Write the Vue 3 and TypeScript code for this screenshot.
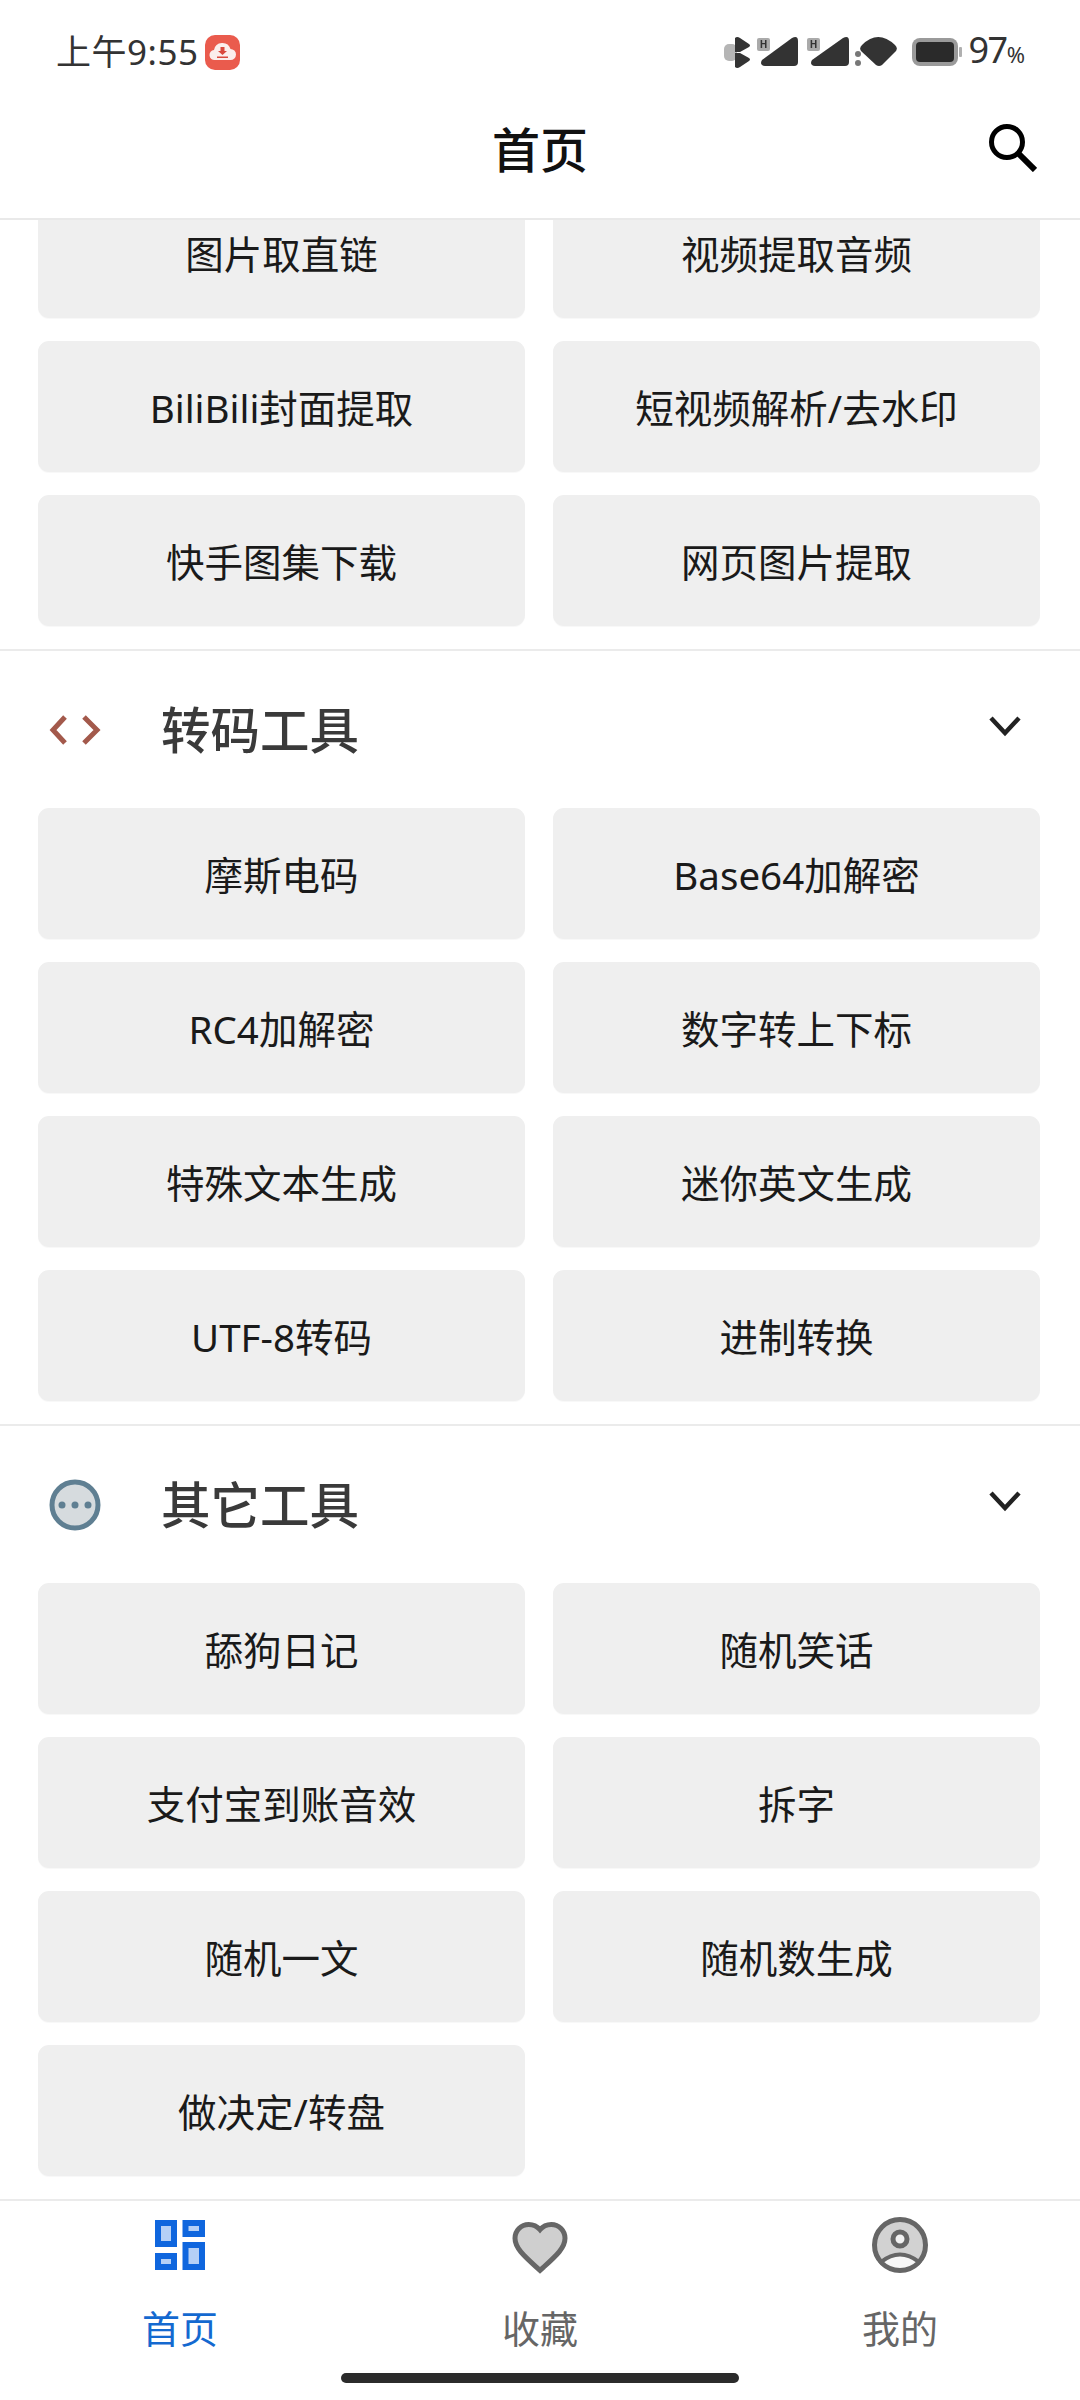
<script setup lang="ts">
interface Section {
  name?: string
  icon?: 'code' | 'more'
  tools: string[]
}

const sections: Section[] = [
  {
    tools: ['图片取直链', '视频提取音频', 'BiliBili封面提取', '短视频解析/去水印', '快手图集下载', '网页图片提取'],
  },
  {
    name: '转码工具',
    icon: 'code',
    tools: ['摩斯电码', 'Base64加解密', 'RC4加解密', '数字转上下标', '特殊文本生成', '迷你英文生成', 'UTF-8转码', '进制转换'],
  },
  {
    name: '其它工具',
    icon: 'more',
    tools: ['舔狗日记', '随机笑话', '支付宝到账音效', '拆字', '随机一文', '随机数生成', '做决定/转盘'],
  },
]
</script>

<template>
  <div class="page">
    <header class="top">
      <div class="status">
        <div class="status-left">
          <span class="time">上午9:55</span>
          <svg class="app-badge" width="35" height="35" viewBox="0 0 35 35">
            <rect width="35" height="35" rx="10" fill="#ea5b4d" />
            <path d="M10 25a5 5 0 0 1-1-10 8.500 8.500 0 0 1 16.500-1 5.500 5.500 0 0 1 0 11z" fill="#fbeeec" />
            <path d="M15.500 12h4v4h2.500l-4.500 4-4.500-4h2.500z" fill="#d9483c" />
            <rect x="12" y="21.500" width="11" height="1.500" fill="#d9483c" />
          </svg>
        </div>
        <div class="status-right">
          <svg class="status-icons" width="240" height="44" viewBox="726 30 240 44">
            <rect x="726" y="44" width="13" height="17" rx="5" fill="#b5b5b5" />
            <path d="M737 38q2-2 5 0l9 6q2 1.500 0 3l-9 5h-5zM737 53h5l9 5q2 1.500 0 3l-9 6q-3 2-5 0z" fill="#333" />
            <rect x="759" y="38" width="13" height="13" rx="2" fill="#aaa" />
            <text x="765.500" y="48" class="net">H</text>
            <path d="M764 60l30-22q6-3 6 3v21q0 4-4 4h-29q-6-1-3-6z" fill="#333" />
            <rect x="809" y="38" width="13" height="13" rx="2" fill="#aaa" />
            <text x="815.500" y="48" class="net">H</text>
            <path d="M814 60l31-22q6-3 6 3v21q0 4-4 4h-30q-6-1-3-6z" fill="#333" />
            <circle cx="860" cy="54" r="3" fill="#777" />
            <circle cx="860" cy="63" r="3" fill="#777" />
            <path d="M864 45q16-16 33 0 3 3 1 6l-14 14q-3 2-6 0l-15-14q-2-3 1-6z" fill="#333" />
            <rect x="914" y="38" width="46" height="28" rx="8" fill="#9a9a9a" />
            <rect x="918" y="42" width="38" height="20" rx="4" fill="#2a2a2a" />
            <rect x="961" y="47" width="3" height="10" rx="1" fill="#b0b0b0" />
          </svg>
          <span class="battery">97<small>%</small></span>
        </div>
      </div>
      <div class="title-row">
        <span></span>
        <h1 class="title">首页</h1>
        <svg class="search" width="48" height="48" viewBox="0 0 48 48">
          <circle cx="18" cy="18" r="15.500" fill="none" stroke="#000" stroke-width="5" />
          <path d="M29 29l17 17" stroke="#000" stroke-width="6" fill="none" />
        </svg>
      </div>
    </header>

    <main class="list">
      <div class="scroller">
        <section v-for="(section, i) in sections" :key="i" class="section">
          <div v-if="section.name" class="section-head">
            <svg class="section-icon" width="52" height="52" viewBox="0 0 52 52">
              <g v-if="section.icon === 'code'" fill="none" stroke="#a3594b" stroke-width="5">
                <path d="M16 13L4 26l12 13" />
                <path d="M35 13l13 13-13 13" />
              </g>
              <g v-else>
                <circle cx="26" cy="26" r="23" fill="#d6dbde" stroke="#5f7f92" stroke-width="5" />
                <circle cx="13" cy="26" r="3.500" fill="#5f7f92" />
                <circle cx="26" cy="26" r="3.500" fill="#5f7f92" />
                <circle cx="39" cy="26" r="3.500" fill="#5f7f92" />
              </g>
            </svg>
            <h2 class="section-name">{{ section.name }}</h2>
            <svg class="chevron" width="34" height="22" viewBox="0 0 34 22">
              <path d="M3 3l14 15L31 3" fill="none" stroke="#222" stroke-width="4.500" />
            </svg>
          </div>
          <div class="grid">
            <button v-for="tool in section.tools" :key="tool" class="tool">{{ tool }}</button>
          </div>
        </section>
      </div>
    </main>

    <nav class="tabs">
      <div class="tab-row">
        <div class="tab active">
          <svg width="60" height="60" viewBox="0 0 60 60">
            <g fill="#b5d0f6" stroke="#0f66de" stroke-width="6">
              <rect x="8" y="8" width="16" height="21" />
              <rect x="35.500" y="8" width="16.500" height="11" />
              <rect x="8" y="41" width="16" height="11" />
              <rect x="35.500" y="30" width="16.500" height="22" />
            </g>
          </svg>
          <span>首页</span>
        </div>
        <div class="tab">
          <svg class="heart" width="60" height="60" viewBox="0 0 24 24">
            <path d="M12 21.350l-1.450-1.320C5.400 15.360 2 12.280 2 8.500 2 5.420 4.420 3 7.500 3c1.740 0 3.410.81 4.500 2.090C13.090 3.810 14.760 3 16.500 3 19.580 3 22 5.420 22 8.500c0 3.780-3.400 6.860-8.550 11.540L12 21.350z" fill="#cfcfcf" stroke="#666" stroke-width="2" />
          </svg>
          <span>收藏</span>
        </div>
        <div class="tab">
          <svg width="60" height="60" viewBox="0 0 60 60">
            <circle cx="30" cy="30" r="25.500" fill="#d2d2d2" stroke="#666" stroke-width="5" />
            <circle cx="30" cy="24" r="7" fill="#f2f2f2" stroke="#666" stroke-width="5" />
            <path d="M11 47q19-15 38 0-8 8-19 8t-19-8z" fill="#f7f7f7" stroke="#666" stroke-width="4" />
          </svg>
          <span>我的</span>
        </div>
      </div>
      <div class="home-bar"></div>
    </nav>
  </div>
</template>

<style>
html,
body {
  margin: 0;
  background: #fff;
}
</style>

<style scoped>
.page {
  width: 1080px;
  height: 2400px;
  display: flex;
  flex-direction: column;
  background: #fff;
  font-family: "Noto Sans", "Noto Sans CJK SC", sans-serif;
  overflow: hidden;
}
.top {
  flex: none;
  height: 220px;
  box-sizing: border-box;
  border-bottom: 2px solid #e9e9e9;
}
.status {
  height: 104px;
  display: flex;
  align-items: center;
  justify-content: space-between;
  padding: 0 55px 0 56px;
}
.status-left,
.status-right {
  display: flex;
  align-items: center;
}
.time {
  font-size: 35px;
  line-height: 44px;
  color: #333;
  letter-spacing: 0.5px;
}
.app-badge {
  margin-left: 7px;
}
.status-icons {
  filter: blur(0.5px);
}
.net {
  font-size: 10px;
  font-weight: 700;
  text-anchor: middle;
  fill: #333;
}
.battery {
  font-size: 36px;
  line-height: 44px;
  letter-spacing: -1.500px;
  color: #333;
  margin-left: 5px;
}
.battery small {
  font-size: 22px;
  letter-spacing: 0;
}
.title-row {
  height: 92px;
  display: grid;
  grid-template-columns: 1fr auto 1fr;
  align-items: center;
  padding: 0 43px;
}
.title {
  margin: 0;
  font-size: 48px;
  line-height: 60px;
  font-weight: 500;
  color: #111;
}
.search {
  justify-self: end;
  margin-top: -4px;
}
.list {
  flex: 1;
  min-height: 0;
  overflow: hidden;
}
.scroller {
  margin-top: -33px;
}
.section {
  padding-bottom: 23px;
  border-bottom: 2px solid #ebebeb;
}
.section:last-child {
  border-bottom: none;
}
.section-head {
  height: 157px;
  display: flex;
  align-items: center;
  padding: 0 58px 0 49px;
}
.section-icon {
  flex: none;
}
.section-name {
  flex: 1;
  margin: 0 0 0 60px;
  font-size: 49.500px;
  line-height: 60px;
  font-weight: 500;
  color: #3a3a3a;
}
.chevron {
  flex: none;
  margin-top: -8px;
}
.grid {
  display: grid;
  grid-template-columns: 487px 487px;
  column-gap: 28px;
  row-gap: 23px;
  padding: 0 40px 0 38px;
}
.tool {
  height: 131px;
  border: none;
  border-radius: 11px;
  background: #efefef;
  box-shadow: 0 1px 1px rgba(0, 0, 0, 0.03);
  padding: 0 0 2px;
  font-family: inherit;
  font-size: 38.500px;
  color: #1a1a1a;
}
.tabs {
  flex: none;
  height: 201px;
  box-sizing: border-box;
  border-top: 2px solid #ebebeb;
  display: flex;
  flex-direction: column;
  align-items: center;
}
.tab-row {
  width: 100%;
  display: grid;
  grid-template-columns: repeat(3, 1fr);
  padding-top: 14px;
}
.tab {
  display: flex;
  flex-direction: column;
  align-items: center;
  font-size: 38px;
  line-height: 48px;
  color: #666;
}
.tab span {
  margin-top: 29px;
}
.tab.active {
  color: #1469d0;
}
.heart {
  transform: translateY(2px);
}
.home-bar {
  width: 398px;
  height: 10px;
  margin-top: 21px;
  border-radius: 5px;
  background: #2b2b2b;
}
</style>
